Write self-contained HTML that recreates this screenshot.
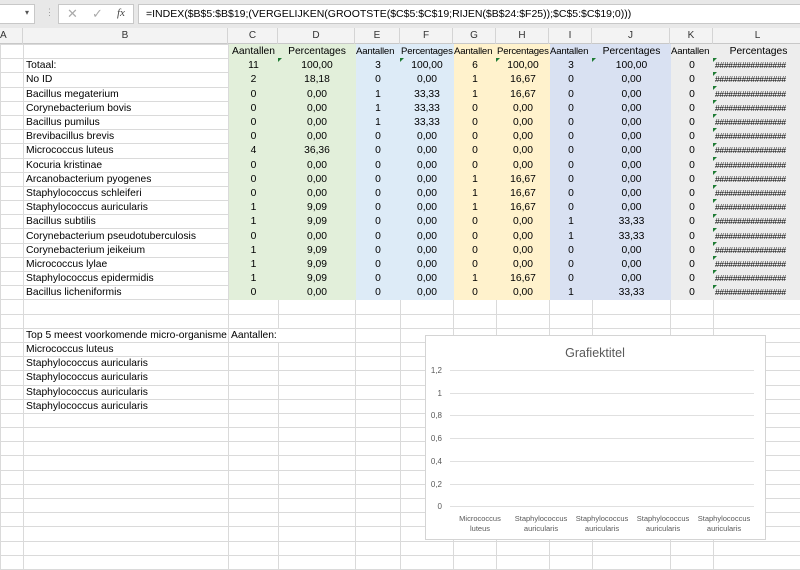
<!DOCTYPE html>
<html><head><meta charset="utf-8">
<style>
*{margin:0;padding:0;box-sizing:border-box}
body{width:800px;height:565px;overflow:hidden;background:#fff;font-family:"Liberation Sans",Calibri,sans-serif;font-size:11px;color:#000;position:relative}
#top{position:absolute;left:0;top:0;width:800px;height:28px;background:#e8e8e8}
.box{position:absolute;background:#fff;border:1px solid #c8c8c8;top:4px;height:20px}
#ch{position:absolute;left:0;top:28px;width:800px;height:16px;background:#f3f3f3;border-bottom:1px solid #c8c8c8}
#ch div{position:absolute;top:0;height:16px;line-height:16px;text-align:center;border-right:1px solid #d4d4d4;font-size:10px;color:#333}
table{position:absolute;left:0;top:44px;width:803px;border-collapse:collapse;table-layout:fixed}
td{height:14.2px;border:1px solid #dadada;padding:0 2px;white-space:nowrap;overflow:hidden;line-height:13px;font-size:10.3px;text-align:center}
td.b{text-align:left;padding-left:2px}
.g{background:#e2efda;border-color:#e2efda}.bl{background:#ddebf7;border-color:#ddebf7}.y{background:#fff2cc;border-color:#fff2cc}.p{background:#d9e1f2;border-color:#d9e1f2}.k{background:#ededed;border-color:#ededed}
.h{font-size:8.5px;letter-spacing:-0.3px;text-align:left;padding-left:1px}
td.s{font-size:9.6px;padding:0;letter-spacing:-0.2px;text-align:left}
</style></head><body>
<div id="top">
<div class="box" style="left:-2px;width:37px"><span style="position:absolute;right:5px;top:3px;font-size:8px;color:#555">▾</span></div>
<div style="position:absolute;left:45px;top:7px;color:#999;font-size:9px">⋮</div>
<div class="box" style="left:58px;width:76px;color:#aaa;font-size:13px"><span style="position:absolute;left:8px;top:1px">✕</span><span style="position:absolute;left:33px;top:1px">✓</span><span style="position:absolute;left:58px;top:2px;color:#444;font-style:italic;font-family:'Liberation Serif',serif;font-size:11px">fx</span></div>
<div class="box" style="left:138px;width:664px;padding-left:7px;line-height:18px;font-size:10.5px">=INDEX($B$5:$B$19;(VERGELIJKEN(GROOTSTE($C$5:$C$19;RIJEN($B$24:$F25));$C$5:$C$19;0)))</div>
</div>
<div id="ch">
<div style="left:0;width:23px;text-align:left">A</div>
<div style="left:23px;width:205px">B</div>
<div style="left:228px;width:50px">C</div>
<div style="left:278px;width:77px">D</div>
<div style="left:355px;width:45px">E</div>
<div style="left:400px;width:53px">F</div>
<div style="left:453px;width:43px">G</div>
<div style="left:496px;width:53px">H</div>
<div style="left:549px;width:43px">I</div>
<div style="left:592px;width:78px">J</div>
<div style="left:670px;width:43px">K</div>
<div style="left:713px;width:90px">L</div>
</div>
<table>
<colgroup><col style="width:23px"><col style="width:205px"><col style="width:50px"><col style="width:77px"><col style="width:45px"><col style="width:53px"><col style="width:43px"><col style="width:53px"><col style="width:43px"><col style="width:78px"><col style="width:43px"><col style="width:90px"></colgroup>
<tr><td></td><td class="b"></td><td class="g">Aantallen</td><td class="g">Percentages</td><td class="bl s">Aantallen</td><td class="bl s">Percentages</td><td class="y s">Aantallen</td><td class="y s">Percentages</td><td class="p s">Aantallen</td><td class="p">Percentages</td><td class="k s">Aantallen</td><td class="k">Percentages</td></tr>
<tr><td></td><td class="b">Totaal:</td><td class="g">11</td><td class="g">100,00</td><td class="bl">3</td><td class="bl">100,00</td><td class="y">6</td><td class="y">100,00</td><td class="p">3</td><td class="p">100,00</td><td class="k">0</td><td class="k h">################</td></tr>
<tr><td></td><td class="b">No ID</td><td class="g">2</td><td class="g">18,18</td><td class="bl">0</td><td class="bl">0,00</td><td class="y">1</td><td class="y">16,67</td><td class="p">0</td><td class="p">0,00</td><td class="k">0</td><td class="k h">################</td></tr>
<tr><td></td><td class="b">Bacillus megaterium</td><td class="g">0</td><td class="g">0,00</td><td class="bl">1</td><td class="bl">33,33</td><td class="y">1</td><td class="y">16,67</td><td class="p">0</td><td class="p">0,00</td><td class="k">0</td><td class="k h">################</td></tr>
<tr><td></td><td class="b">Corynebacterium bovis</td><td class="g">0</td><td class="g">0,00</td><td class="bl">1</td><td class="bl">33,33</td><td class="y">0</td><td class="y">0,00</td><td class="p">0</td><td class="p">0,00</td><td class="k">0</td><td class="k h">################</td></tr>
<tr><td></td><td class="b">Bacillus pumilus</td><td class="g">0</td><td class="g">0,00</td><td class="bl">1</td><td class="bl">33,33</td><td class="y">0</td><td class="y">0,00</td><td class="p">0</td><td class="p">0,00</td><td class="k">0</td><td class="k h">################</td></tr>
<tr><td></td><td class="b">Brevibacillus brevis</td><td class="g">0</td><td class="g">0,00</td><td class="bl">0</td><td class="bl">0,00</td><td class="y">0</td><td class="y">0,00</td><td class="p">0</td><td class="p">0,00</td><td class="k">0</td><td class="k h">################</td></tr>
<tr><td></td><td class="b">Micrococcus luteus</td><td class="g">4</td><td class="g">36,36</td><td class="bl">0</td><td class="bl">0,00</td><td class="y">0</td><td class="y">0,00</td><td class="p">0</td><td class="p">0,00</td><td class="k">0</td><td class="k h">################</td></tr>
<tr><td></td><td class="b">Kocuria kristinae</td><td class="g">0</td><td class="g">0,00</td><td class="bl">0</td><td class="bl">0,00</td><td class="y">0</td><td class="y">0,00</td><td class="p">0</td><td class="p">0,00</td><td class="k">0</td><td class="k h">################</td></tr>
<tr><td></td><td class="b">Arcanobacterium pyogenes</td><td class="g">0</td><td class="g">0,00</td><td class="bl">0</td><td class="bl">0,00</td><td class="y">1</td><td class="y">16,67</td><td class="p">0</td><td class="p">0,00</td><td class="k">0</td><td class="k h">################</td></tr>
<tr><td></td><td class="b">Staphylococcus schleiferi</td><td class="g">0</td><td class="g">0,00</td><td class="bl">0</td><td class="bl">0,00</td><td class="y">1</td><td class="y">16,67</td><td class="p">0</td><td class="p">0,00</td><td class="k">0</td><td class="k h">################</td></tr>
<tr><td></td><td class="b">Staphylococcus auricularis</td><td class="g">1</td><td class="g">9,09</td><td class="bl">0</td><td class="bl">0,00</td><td class="y">1</td><td class="y">16,67</td><td class="p">0</td><td class="p">0,00</td><td class="k">0</td><td class="k h">################</td></tr>
<tr><td></td><td class="b">Bacillus subtilis</td><td class="g">1</td><td class="g">9,09</td><td class="bl">0</td><td class="bl">0,00</td><td class="y">0</td><td class="y">0,00</td><td class="p">1</td><td class="p">33,33</td><td class="k">0</td><td class="k h">################</td></tr>
<tr><td></td><td class="b">Corynebacterium pseudotuberculosis</td><td class="g">0</td><td class="g">0,00</td><td class="bl">0</td><td class="bl">0,00</td><td class="y">0</td><td class="y">0,00</td><td class="p">1</td><td class="p">33,33</td><td class="k">0</td><td class="k h">################</td></tr>
<tr><td></td><td class="b">Corynebacterium jeikeium</td><td class="g">1</td><td class="g">9,09</td><td class="bl">0</td><td class="bl">0,00</td><td class="y">0</td><td class="y">0,00</td><td class="p">0</td><td class="p">0,00</td><td class="k">0</td><td class="k h">################</td></tr>
<tr><td></td><td class="b">Micrococcus lylae</td><td class="g">1</td><td class="g">9,09</td><td class="bl">0</td><td class="bl">0,00</td><td class="y">0</td><td class="y">0,00</td><td class="p">0</td><td class="p">0,00</td><td class="k">0</td><td class="k h">################</td></tr>
<tr><td></td><td class="b">Staphylococcus epidermidis</td><td class="g">1</td><td class="g">9,09</td><td class="bl">0</td><td class="bl">0,00</td><td class="y">1</td><td class="y">16,67</td><td class="p">0</td><td class="p">0,00</td><td class="k">0</td><td class="k h">################</td></tr>
<tr><td></td><td class="b">Bacillus licheniformis</td><td class="g">0</td><td class="g">0,00</td><td class="bl">0</td><td class="bl">0,00</td><td class="y">0</td><td class="y">0,00</td><td class="p">1</td><td class="p">33,33</td><td class="k">0</td><td class="k h">################</td></tr>
<tr><td></td><td></td><td></td><td></td><td></td><td></td><td></td><td></td><td></td><td></td><td></td><td></td></tr>
<tr><td></td><td></td><td></td><td></td><td></td><td></td><td></td><td></td><td></td><td></td><td></td><td></td></tr>
<tr><td></td><td class="b">Top 5 meest voorkomende micro-organisme</td><td class="b" style="border-right-color:transparent;overflow:visible">Aantallen:</td><td></td><td></td><td></td><td></td><td></td><td></td><td></td><td></td><td></td></tr>
<tr><td></td><td class="b">Micrococcus luteus</td><td></td><td></td><td></td><td></td><td></td><td></td><td></td><td></td><td></td><td></td></tr>
<tr><td></td><td class="b">Staphylococcus auricularis</td><td></td><td></td><td></td><td></td><td></td><td></td><td></td><td></td><td></td><td></td></tr>
<tr><td></td><td class="b">Staphylococcus auricularis</td><td></td><td></td><td></td><td></td><td></td><td></td><td></td><td></td><td></td><td></td></tr>
<tr><td></td><td class="b">Staphylococcus auricularis</td><td></td><td></td><td></td><td></td><td></td><td></td><td></td><td></td><td></td><td></td></tr>
<tr><td></td><td class="b">Staphylococcus auricularis</td><td></td><td></td><td></td><td></td><td></td><td></td><td></td><td></td><td></td><td></td></tr>
<tr><td></td><td></td><td></td><td></td><td></td><td></td><td></td><td></td><td></td><td></td><td></td><td></td></tr>
<tr><td></td><td></td><td></td><td></td><td></td><td></td><td></td><td></td><td></td><td></td><td></td><td></td></tr>
<tr><td></td><td></td><td></td><td></td><td></td><td></td><td></td><td></td><td></td><td></td><td></td><td></td></tr>
<tr><td></td><td></td><td></td><td></td><td></td><td></td><td></td><td></td><td></td><td></td><td></td><td></td></tr>
<tr><td></td><td></td><td></td><td></td><td></td><td></td><td></td><td></td><td></td><td></td><td></td><td></td></tr>
<tr><td></td><td></td><td></td><td></td><td></td><td></td><td></td><td></td><td></td><td></td><td></td><td></td></tr>
<tr><td></td><td></td><td></td><td></td><td></td><td></td><td></td><td></td><td></td><td></td><td></td><td></td></tr>
<tr><td></td><td></td><td></td><td></td><td></td><td></td><td></td><td></td><td></td><td></td><td></td><td></td></tr>
<tr><td></td><td></td><td></td><td></td><td></td><td></td><td></td><td></td><td></td><td></td><td></td><td></td></tr>
<tr><td></td><td></td><td></td><td></td><td></td><td></td><td></td><td></td><td></td><td></td><td></td><td></td></tr>
<tr><td></td><td></td><td></td><td></td><td></td><td></td><td></td><td></td><td></td><td></td><td></td><td></td></tr>
</table>
<svg style="position:absolute;left:0;top:0" width="800" height="565">
<g fill="#1e7b34"><path d="M278 58h4l-4 4z"/><path d="M400 58h4l-4 4z"/><path d="M496 58h4l-4 4z"/><path d="M592 58h4l-4 4z"/><path d="M713 58h4l-4 4z"/><path d="M713 72h4l-4 4z"/><path d="M713 86h4l-4 4z"/><path d="M713 100h4l-4 4z"/><path d="M713 114h4l-4 4z"/><path d="M713 128h4l-4 4z"/><path d="M713 143h4l-4 4z"/><path d="M713 157h4l-4 4z"/><path d="M713 171h4l-4 4z"/><path d="M713 185h4l-4 4z"/><path d="M713 199h4l-4 4z"/><path d="M713 214h4l-4 4z"/><path d="M713 228h4l-4 4z"/><path d="M713 242h4l-4 4z"/><path d="M713 256h4l-4 4z"/><path d="M713 270h4l-4 4z"/><path d="M713 285h4l-4 4z"/></g>
<rect x="425.5" y="335.5" width="340" height="204" fill="#fff" stroke="#d4d4d4"/>
<text x="595" y="357" text-anchor="middle" font-size="12.5" fill="#595959" font-family="Liberation Sans,sans-serif">Grafiektitel</text>
<g stroke="#e0e0e0" stroke-width="1">
<line x1="450" x2="754" y1="370.5" y2="370.5"/><line x1="450" x2="754" y1="393.5" y2="393.5"/><line x1="450" x2="754" y1="415.5" y2="415.5"/><line x1="450" x2="754" y1="438.5" y2="438.5"/><line x1="450" x2="754" y1="461.5" y2="461.5"/><line x1="450" x2="754" y1="484.5" y2="484.5"/><line x1="450" x2="754" y1="506.5" y2="506.5"/>
</g>
<g font-size="8" fill="#595959" font-family="Liberation Sans,sans-serif" text-anchor="end">
<text x="442" y="373">1,2</text><text x="442" y="396">1</text><text x="442" y="418">0,8</text><text x="442" y="441">0,6</text><text x="442" y="464">0,4</text><text x="442" y="487">0,2</text><text x="442" y="509">0</text>
</g>
<g font-size="7.5" fill="#595959" font-family="Liberation Sans,sans-serif" text-anchor="middle">
<text x="480" y="521">Micrococcus</text><text x="480" y="531">luteus</text>
<text x="541" y="521">Staphylococcus</text><text x="541" y="531">auricularis</text>
<text x="602" y="521">Staphylococcus</text><text x="602" y="531">auricularis</text>
<text x="663" y="521">Staphylococcus</text><text x="663" y="531">auricularis</text>
<text x="724" y="521">Staphylococcus</text><text x="724" y="531">auricularis</text>
</g>
</svg>
</body></html>
